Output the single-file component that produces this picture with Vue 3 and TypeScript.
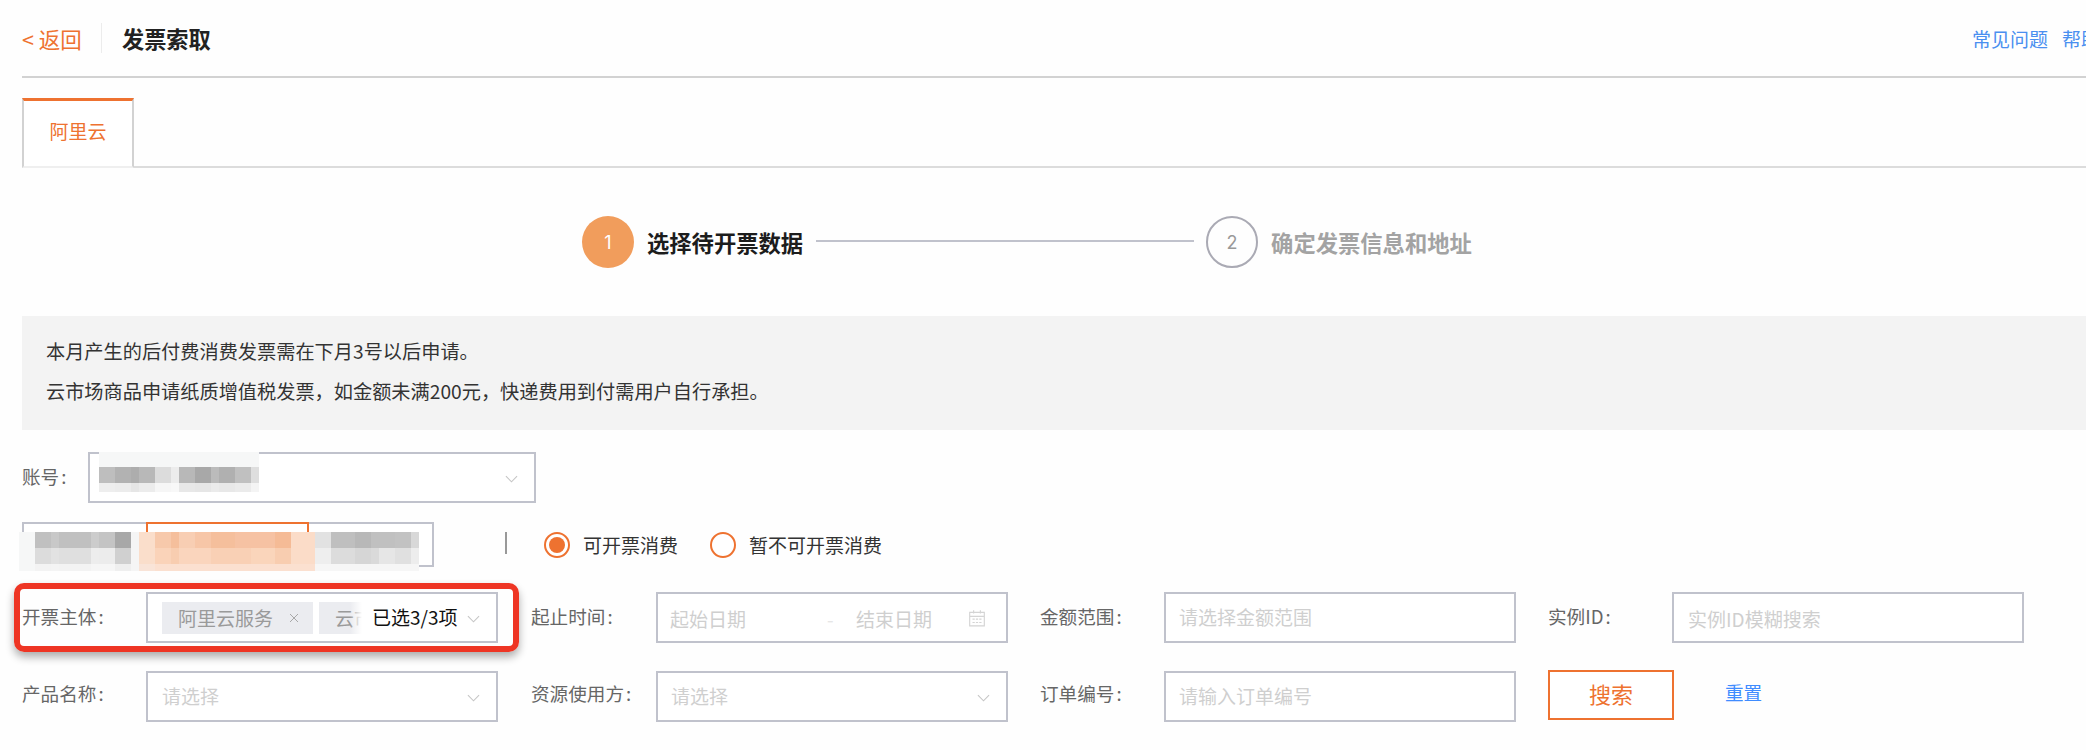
<script setup lang="ts">
type Col = [number, string, string, string]

const accountCols: Col[] = [
  [16, '#bebebe', '#eeeeee', '#f6f7f7'],
  [16, '#b2b2b2', '#ececec', '#f6f7f7'],
  [8, '#adadad', '#e6e6e6', '#f6f7f7'],
  [16, '#b8b8b8', '#ececec', '#f6f7f7'],
  [16, '#dcdcdc', '#f6f6f6', '#f6f7f7'],
  [8, '#ececec', '#f8f8f8', '#f6f7f7'],
  [16, '#b8b8b8', '#e8e8e8', '#f6f7f7'],
  [16, '#a8a8a8', '#e6e6e6', '#f6f7f7'],
  [8, '#bbbbbb', '#ebebeb', '#f6f7f7'],
  [16, '#b0b0b0', '#e8e8e8', '#f6f7f7'],
  [16, '#c0c0c0', '#ebebeb', '#f6f7f7'],
  [8, '#dedede', '#f4f4f4', '#f6f7f7'],
]

const tabCols: Col[] = [
  [16, '#f6f7f7', '#f6f7f7', '#f6f7f7'],
  [16, '#c0c0c0', '#dcdcdc', '#f3f3f3'],
  [8, '#c8c8c8', '#e2e2e2', '#f4f4f4'],
  [32, '#c0c0c0', '#dfdfdf', '#f3f3f3'],
  [8, '#cccccc', '#ededed', '#f6f6f6'],
  [16, '#c4c4c4', '#ececec', '#f6f6f6'],
  [16, '#a8a8a8', '#d0d0d0', '#efefef'],
  [8, '#f5f5f5', '#f5f5f5', '#f5f5f5'],
  [16, '#fadecb', '#fadecb', '#f9e4d8'],
  [16, '#f7c9ab', '#fad3b9', '#fbe0d0'],
  [8, '#f5bf9c', '#f8cdb0', '#fbe0d0'],
  [16, '#f8ceb3', '#fad5bd', '#fbe0d0'],
  [16, '#f7c6a7', '#fad5bd', '#fbe0d0'],
  [24, '#f5bf9c', '#f9d0b5', '#fbe0d0'],
  [16, '#f6c2a3', '#f9d0b5', '#fbe0d0'],
  [24, '#f6c2a3', '#fad5bb', '#fbe0d0'],
  [16, '#f5bb96', '#f8cdb0', '#fbe0d0'],
  [24, '#fbdcc8', '#fbdcc8', '#fbe0d0'],
  [16, '#e2e2e2', '#eeeeee', '#f6f6f6'],
  [24, '#bfbfbf', '#dcdcdc', '#f6f6f6'],
  [16, '#b8b8b8', '#d6d6d6', '#f6f6f6'],
  [8, '#c0c0c0', '#dadada', '#f6f6f6'],
  [16, '#c0c0c0', '#e6e6e6', '#f6f6f6'],
  [16, '#c2c2c2', '#e0e0e0', '#f6f6f6'],
  [8, '#d8d8d8', '#ededed', '#f6f6f6'],
]
</script>

<template>
  <div class="page">
    <header class="topbar">
      <a class="back">&lt; 返回</a>
      <span class="topbar-sep"></span>
      <h1 class="title">发票索取</h1>
      <nav class="help">
        <a>常见问题</a>
        <a>帮助文档</a>
      </nav>
    </header>

    <div class="tabs">
      <div class="tab">阿里云</div>
    </div>

    <div class="steps">
      <span class="dot dot-on">1</span>
      <span class="step-text step-on">选择待开票数据</span>
      <span class="step-line"></span>
      <span class="dot dot-off">2</span>
      <span class="step-text step-off">确定发票信息和地址</span>
    </div>

    <div class="notice">
      <p>本月产生的后付费消费发票需在下月3号以后申请。</p>
      <p>云市场商品申请纸质增值税发票，如金额未满200元，快递费用到付需用户自行承担。</p>
    </div>

    <div class="form">
      <div class="account-row">
        <label class="label account-label">账号<span class="colon">:</span></label>
        <div class="box account-box">
          <div class="mosaic account-mosaic">
            <div v-for="(c, i) in accountCols" :key="i" class="mcol" :style="{ width: c[0] + 'px' }">
              <i class="m-a" style="background:#f6f7f7"></i>
              <i class="m-b" :style="{ background: c[1] }"></i>
              <i class="m-c" :style="{ background: c[2] }"></i>
            </div>
          </div>
          <svg class="chev" viewBox="0 0 14 8"><path d="M1 1l6 6 6-6" /></svg>
        </div>
      </div>

      <div class="filter-row">
        <div class="seg">
          <span class="seg-active"></span>
          <div class="mosaic seg-mosaic">
            <div v-for="(c, i) in tabCols" :key="i" class="mcol" :style="{ width: c[0] + 'px' }">
              <i class="m-d" :style="{ background: c[1] }"></i>
              <i class="m-d" :style="{ background: c[2] }"></i>
              <i class="m-e" :style="{ background: c[3] }"></i>
            </div>
          </div>
        </div>
        <span class="vsep"></span>
        <label class="radio radio-on"><i class="radio-mark"></i>可开票消费</label>
        <label class="radio"><i class="radio-mark"></i>暂不可开票消费</label>
      </div>

      <div class="grid">
        <div class="red-mark"></div>

        <div class="cell">
          <label class="label">开票主体<span class="colon">:</span></label>
          <div class="box tags-box">
            <span class="tag">阿里云服务<svg class="tag-x" viewBox="0 0 10 10"><path d="M1 1l8 8M9 1l-8 8" /></svg></span>
            <span class="tag tag-cut">云市场</span>
            <span class="count">已选3/3项</span>
            <svg class="chev" viewBox="0 0 14 8"><path d="M1 1l6 6 6-6" /></svg>
          </div>
        </div>

        <div class="cell cell-wide">
          <label class="label">起止时间<span class="colon">:</span></label>
          <div class="box date-box">
            <span class="ph date-text">起始日期</span>
            <span class="ph date-dash">-</span>
            <span class="ph date-text">结束日期</span>
            <svg class="cal" viewBox="0 0 16 16">
              <path d="M1.5 3h13v12h-13zM1.5 6.5h13M5 1v3M11 1v3" />
              <path d="M4 9h2M7 9h2M10 9h2M4 12h2M7 12h2M10 12h2" />
            </svg>
          </div>
        </div>

        <div class="cell">
          <label class="label">金额范围<span class="colon">:</span></label>
          <div class="box box-tight"><span class="ph ph-high">请选择金额范围</span></div>
        </div>

        <div class="cell">
          <label class="label">实例ID<span class="colon">:</span></label>
          <div class="box"><span class="ph">实例ID模糊搜索</span></div>
        </div>

        <div class="cell row-two">
          <label class="label">产品名称<span class="colon">:</span></label>
          <div class="box">
            <span class="ph">请选择</span>
            <svg class="chev" viewBox="0 0 14 8"><path d="M1 1l6 6 6-6" /></svg>
          </div>
        </div>

        <div class="cell cell-wide row-two">
          <label class="label">资源使用方<span class="colon">:</span></label>
          <div class="box box-tight">
            <span class="ph">请选择</span>
            <svg class="chev" viewBox="0 0 14 8"><path d="M1 1l6 6 6-6" /></svg>
          </div>
        </div>

        <div class="cell row-two">
          <label class="label">订单编号<span class="colon">:</span></label>
          <div class="box box-tight"><span class="ph">请输入订单编号</span></div>
        </div>

        <div class="cell actions">
          <button class="search" type="button">搜索</button>
          <a class="reset">重置</a>
        </div>
      </div>
    </div>
  </div>
</template>

<style>
html,
body {
  margin: 0;
  background: #fff;
  overflow: hidden;
}
</style>

<style scoped>
.page {
  width: 2086px;
  height: 750px;
  padding-left: 22px;
  box-sizing: border-box;
  overflow: hidden;
  background: #fefefe;
  color: #333;
  font-family: "Noto Sans CJK SC", "Noto Sans", sans-serif;
  font-size: 18.7px;
}

.topbar {
  display: flex;
  align-items: center;
  height: 78px;
  box-sizing: border-box;
  border-bottom: 2px solid #d2d2d2;
  white-space: nowrap;
}
.back {
  flex: none;
  color: #ee7230;
  font-size: 21.5px;
  width: 79px;
}
.topbar-sep {
  flex: none;
  width: 1px;
  height: 30px;
  background: #ececec;
}
.title {
  flex: none;
  width: 90px;
  margin: 0 0 0 20px;
  font-size: 22.2px;
  font-weight: 700;
  color: #222;
}
.help {
  display: flex;
  gap: 14px;
  margin-left: 1760px;
  font-size: 19px;
  color: #4a8ff0;
  flex: none;
}

.tabs {
  margin-top: 20px;
  height: 70px;
  box-sizing: border-box;
  border-bottom: 2px solid #dcdcdc;
}
.tab {
  width: 112px;
  height: 70px;
  box-sizing: border-box;
  border: 2px solid #d2d2d2;
  border-top: 3px solid #ee7230;
  border-bottom: 2px solid #efefef;
  background: #fff;
  color: #ee7230;
  font-size: 19px;
  line-height: 60px;
  text-align: center;
}

.steps {
  display: flex;
  align-items: center;
  margin-top: 48px;
  height: 52px;
  padding-left: 560px;
}
.dot {
  flex: none;
  width: 52px;
  height: 52px;
  box-sizing: border-box;
  border-radius: 50%;
  display: flex;
  align-items: center;
  justify-content: center;
  font-size: 18px;
  font-family: "Inter", sans-serif;
}
.dot-on {
  background: #f19d5c;
  color: #fff;
}
.dot-off {
  border: 2px solid #aaaab4;
  color: #999;
}
.step-text {
  font-size: 22.3px;
  font-weight: 700;
  margin-left: 13px;
  white-space: nowrap;
}
.step-on {
  color: #1c1c1c;
}
.step-off {
  color: #a3a3a3;
}
.step-line {
  width: 378px;
  height: 2px;
  margin: 0 12px 2px 13px;
  background: #c0c2cc;
}

.notice {
  margin-top: 48px;
  height: 114px;
  box-sizing: border-box;
  padding: 15px 24px;
  background: #f3f3f3;
  color: #333;
  font-size: 19.2px;
  line-height: 40px;
}
.notice p {
  margin: 0;
}

.form {
  padding-top: 22px;
}
.label {
  flex: none;
  width: 124px;
  color: #666;
  font-size: 18.6px;
  white-space: nowrap;
  line-height: 26px;
  margin-top: -4px;
}
.row-two .label {
  margin-top: -8px;
}
.cell-wide .label {
  width: 125px;
}
.colon {
  margin-left: 2px;
}
.box {
  position: relative;
  flex: none;
  width: 352px;
  height: 51px;
  box-sizing: border-box;
  border: 2px solid #c0c2cc;
  background: #fff;
  display: flex;
  align-items: center;
  padding-left: 14px;
}
.box-tight {
  padding-left: 13px;
}
.chev {
  position: absolute;
  right: 16px;
  top: 21px;
  width: 13px;
  height: 8px;
  fill: none;
  stroke: #c6c6c6;
  stroke-width: 1.2;
}

.account-row {
  display: flex;
  align-items: center;
}
.account-label {
  width: 66px;
}
.account-box {
  width: 448px;
}
.mosaic {
  position: absolute;
  display: flex;
  filter: blur(0.5px);
}
.mcol {
  display: flex;
  flex-direction: column;
  flex: none;
}
.mcol i {
  display: block;
}
.account-mosaic {
  left: 9px;
  top: -2px;
}
.m-a {
  height: 15px;
}
.m-b {
  height: 16px;
}
.m-c {
  height: 9px;
}

.filter-row {
  display: flex;
  align-items: center;
  height: 45px;
  margin-top: 19px;
}
.seg {
  position: relative;
  flex: none;
  width: 412px;
  height: 45px;
  box-sizing: border-box;
  border: 2px solid #c0c2cc;
  background: #fff;
}
.seg-active {
  position: absolute;
  left: 122px;
  top: -2px;
  width: 163px;
  height: 12px;
  box-sizing: border-box;
  border: 2px solid #ee7230;
  border-bottom: 0;
}
.seg-mosaic {
  left: -5px;
  top: 8px;
}
.m-d {
  height: 16px;
}
.m-e {
  height: 7px;
}
.vsep {
  flex: none;
  width: 2px;
  height: 22px;
  margin: -3px 37px 0 71px;
  background: #999;
}
.radio {
  display: flex;
  align-items: center;
  gap: 13px;
  margin-right: 32px;
  color: #333;
  font-size: 19px;
  white-space: nowrap;
}
.radio-mark {
  flex: none;
  width: 26px;
  height: 26px;
  box-sizing: border-box;
  border: 2px solid #ee7230;
  border-radius: 50%;
  background: #fff;
  display: flex;
  align-items: center;
  justify-content: center;
}
.radio-on .radio-mark::after {
  content: "";
  width: 16px;
  height: 16px;
  border-radius: 50%;
  background: #ee7230;
}

.grid {
  position: relative;
  display: grid;
  grid-template-columns: 509px 509px 508px 508px;
  row-gap: 28px;
  margin-top: 25px;
}
.cell {
  display: flex;
  align-items: center;
}
.red-mark {
  position: absolute;
  left: -8px;
  top: -9px;
  width: 505px;
  height: 69px;
  box-sizing: border-box;
  border: 6px solid #ee3524;
  border-radius: 10px;
  box-shadow: 0 5px 8px rgba(0, 0, 0, 0.32);
  pointer-events: none;
  z-index: 2;
}
.ph {
  color: #cfcfcf;
  font-size: 19px;
  line-height: 26px;
  margin-top: 2px;
  white-space: nowrap;
}
.ph-high {
  margin-top: -1px;
}
.row-two .ph {
  margin-top: -2px;
}

.tags-box {
  overflow: hidden;
  padding-left: 14px;
  gap: 6px;
}
.tag {
  flex: none;
  display: flex;
  align-items: center;
  height: 32px;
  padding: 0 16px;
  background: #ebecf0;
  color: #9a9a9a;
  font-size: 19px;
  white-space: nowrap;
}
.tag-x {
  width: 10px;
  height: 10px;
  margin-left: 16px;
  margin-right: -2px;
  fill: none;
  stroke: #a8a8a8;
  stroke-width: 1;
}
.tag-cut {
  width: 90px;
  box-sizing: border-box;
}
.count {
  position: absolute;
  right: 0;
  top: 0;
  bottom: 0;
  display: flex;
  align-items: center;
  width: 146px;
  box-sizing: border-box;
  padding-left: 22px;
  padding-bottom: 3px;
  background: linear-gradient(to right, rgba(255, 255, 255, 0), #fff 12px);
  color: #111;
  font-size: 19px;
  white-space: nowrap;
}
.tags-box .chev {
  z-index: 1;
}

.date-box {
  padding-left: 12px;
}
.date-text {
  width: 76px;
}
.date-dash {
  margin-left: 81px;
  margin-right: 25px;
  width: 4px;
  color: #e6e6e6;
}
.cal {
  position: absolute;
  right: 20px;
  top: 15px;
  width: 18px;
  height: 18px;
  fill: none;
  stroke: #d4d4d4;
  stroke-width: 1;
}

.actions {
  gap: 51px;
  align-items: flex-start;
  margin-top: -1px;
}
.search {
  flex: none;
  width: 126px;
  height: 50px;
  box-sizing: border-box;
  border: 2px solid #ee7230;
  background: #fff;
  color: #ee7230;
  font-family: inherit;
  font-size: 22px;
  padding: 0 0 4px;
}
.reset {
  color: #3f8cff;
  font-size: 18.6px;
  line-height: 26px;
  margin-top: 9px;
}
</style>
